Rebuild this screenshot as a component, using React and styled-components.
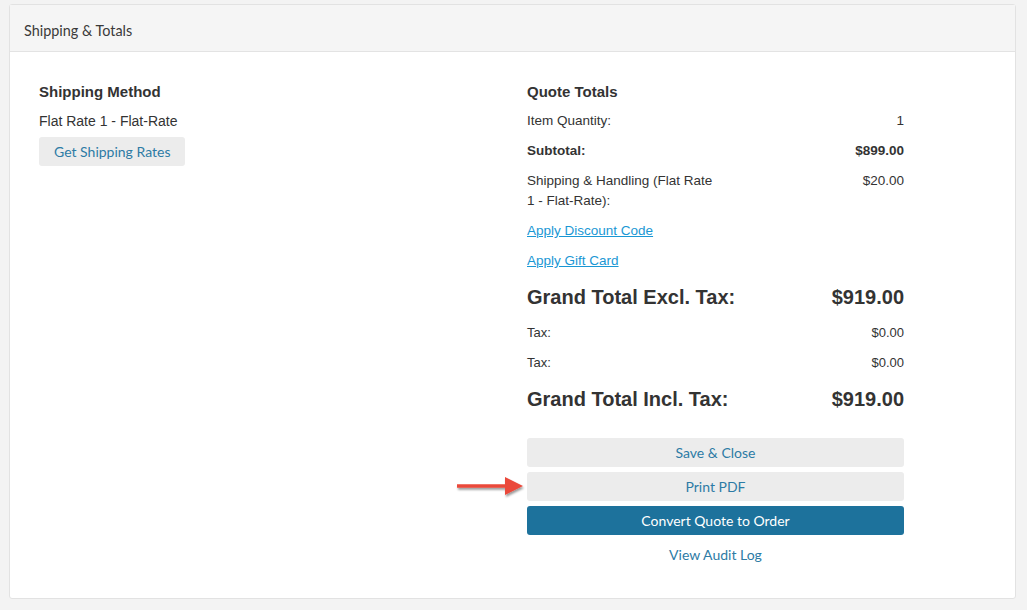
import React from "react";
import styled, { createGlobalStyle } from "styled-components";

const GlobalStyle = createGlobalStyle`
    html, body {
        margin: 0;
        padding: 0;
        background: #f3f3f3;
        font-family: "Liberation Sans", Arial, sans-serif;
        color: #333;
    }
`;

const Page = styled.div`
    padding: 4px 11px 12px 9px;
`;

const Card = styled.div`
    background: #fff;
    border: 1px solid #e2e2e2;
    border-radius: 3px;
    height: 595px;
    box-sizing: border-box;
`;

const CardHeader = styled.div`
    height: 47px;
    display: flex;
    align-items: center;
    padding: 4px 14px 0;
    background: #f5f5f5;
    border-bottom: 1px solid #e3e3e3;
    font-family: Lato, "Open Sans", sans-serif;
    font-size: 14.4px;
    color: #3a3a3a;
    box-sizing: border-box;
`;

const CardBody = styled.div`
    display: grid;
    grid-template-columns: 488px 377px;
    padding: 30px 29px;
`;

const Column = styled.div`
    display: flex;
    flex-direction: column;
    align-items: ${({ $stretch }) => ($stretch ? "stretch" : "flex-start")};
`;

const Heading = styled.h3`
    margin: 0 0 ${({ $gap }) => $gap}px;
    font-size: 15px;
    line-height: 20px;
    font-weight: bold;
    color: #333;
`;

const Text = styled.div`
    font-size: 14px;
    line-height: 20px;
    margin: -1px 0 6px;
`;

const SoftButton = styled.button`
    position: relative;
    border: none;
    border-radius: 3px;
    background: ${({ $primary }) => ($primary ? "#1d729c" : "#ececec")};
    color: ${({ $primary }) => ($primary ? "#fff" : "#2d7ba5")};
    font-family: Lato, "Open Sans", sans-serif;
    font-size: 14px;
    height: 29px;
    padding: 0 15px;
    cursor: pointer;
    width: ${({ $full }) => ($full ? "100%" : "auto")};
`;

const Row = styled.div`
    display: flex;
    justify-content: space-between;
    align-items: ${({ $big }) => ($big ? "center" : "flex-start")};
    padding: ${({ $big }) => ($big ? "11px 0" : "5px 0")};
    font-size: ${({ $big, $small }) => ($big ? "20px" : $small ? "13px" : "13.5px")};
    font-weight: ${({ $bold, $big }) => ($bold || $big ? "bold" : "normal")};
    line-height: 20px;
`;

const Label = styled.span`
    max-width: 192px;
`;

const Link = styled.a`
    color: #1a97d4;
    text-decoration: underline;
    font-size: 13.5px;
    line-height: 20px;
    padding: 5px 0;
    cursor: pointer;
`;

const Actions = styled.div`
    display: flex;
    flex-direction: column;
    gap: 5px;
    margin-top: 18px;
`;

const TextButton = styled.a`
    align-self: center;
    margin-top: 10px;
    font-family: Lato, "Open Sans", sans-serif;
    font-size: 14px;
    line-height: 20px;
    color: #2d7ba5;
    cursor: pointer;
`;

const Pointer = styled.svg`
    position: absolute;
    left: -71px;
    top: 3px;
    overflow: visible;
`;

const Arrow = () => (
    <Pointer width="70" height="24" viewBox="0 0 70 24">
        <defs>
            <filter id="sh" x="-20%" y="-50%" width="140%" height="200%">
                <feDropShadow dx="1" dy="2" stdDeviation="1.3" floodColor="#000" floodOpacity="0.4" />
            </filter>
        </defs>
        <g filter="url(#sh)">
            <path d="M1 9.3 H49 V2 L67 11 L49 20 V12.7 H1 Z" fill="#ea4a3b" strokeLinejoin="round" />
        </g>
    </Pointer>
);

export default function App() {
    return (
        <Page>
            <GlobalStyle />
            <Card>
                <CardHeader>Shipping &amp; Totals</CardHeader>
                <CardBody>
                    <Column>
                        <Heading $gap={10}>Shipping Method</Heading>
                        <Text>Flat Rate 1 - Flat-Rate</Text>
                        <SoftButton>Get Shipping Rates</SoftButton>
                    </Column>
                    <Column $stretch>
                        <Heading $gap={4}>Quote Totals</Heading>
                        <Row>
                            <Label>Item Quantity:</Label>
                            <span>1</span>
                        </Row>
                        <Row $bold>
                            <Label>Subtotal:</Label>
                            <span>$899.00</span>
                        </Row>
                        <Row>
                            <Label>Shipping &amp; Handling (Flat Rate 1 - Flat-Rate):</Label>
                            <span>$20.00</span>
                        </Row>
                        <Column>
                            <Link>Apply Discount Code</Link>
                            <Link>Apply Gift Card</Link>
                        </Column>
                        <Row $big>
                            <span>Grand Total Excl. Tax:</span>
                            <span>$919.00</span>
                        </Row>
                        <Row $small>
                            <Label>Tax:</Label>
                            <span>$0.00</span>
                        </Row>
                        <Row $small>
                            <Label>Tax:</Label>
                            <span>$0.00</span>
                        </Row>
                        <Row $big>
                            <span>Grand Total Incl. Tax:</span>
                            <span>$919.00</span>
                        </Row>
                        <Actions>
                            <SoftButton $full>Save &amp; Close</SoftButton>
                            <SoftButton $full>
                                <Arrow />
                                Print PDF
                            </SoftButton>
                            <SoftButton $full $primary>Convert Quote to Order</SoftButton>
                        </Actions>
                        <TextButton>View Audit Log</TextButton>
                    </Column>
                </CardBody>
            </Card>
        </Page>
    );
}
